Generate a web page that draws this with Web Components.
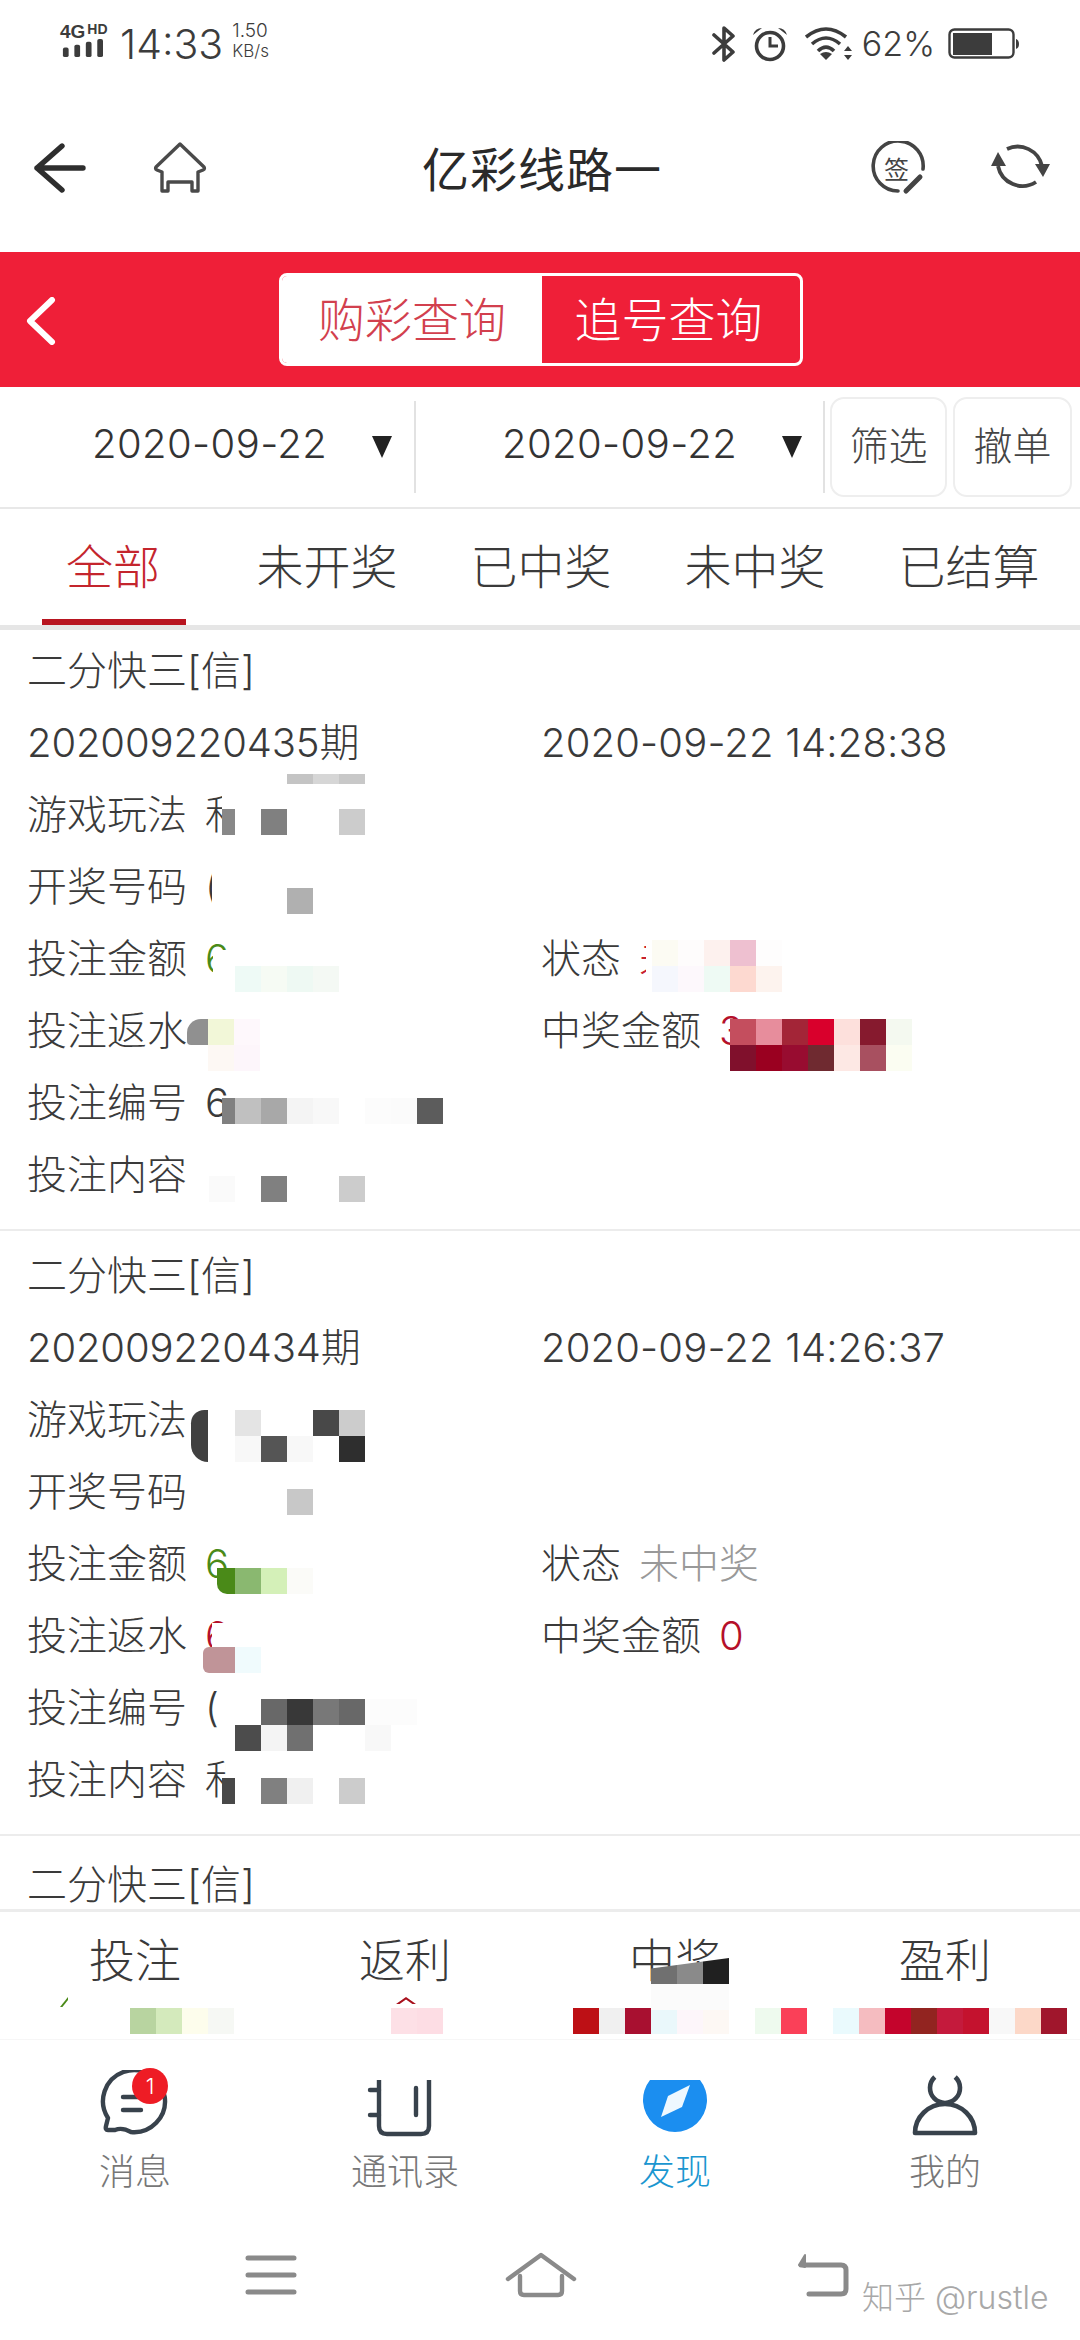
<!DOCTYPE html>
<html lang="zh">
<head>
<meta charset="utf-8">
<title>购彩查询</title>
<style>
    html, body { margin: 0; padding: 0; background: #fff; }
    body { font-family: Inter, "Noto Sans CJK SC", sans-serif; font-weight: 300; color: #333; width: 1080px; height: 2340px; overflow: hidden; }
    .screen { display: flex; flex-direction: column; height: 2340px; overflow: hidden; }
    .list { flex: 1; min-height: 0; overflow: hidden; }
</style>
</head>
<body>
<div class="screen">
    <status-bar></status-bar>
    <title-bar heading="亿彩线路一"></title-bar>
    <query-bar></query-bar>
    <date-filter></date-filter>
    <state-tabs></state-tabs>

    <div class="list">
        <order-card style="--pad: 5px" game="二分快三[信]" issue="202009220435期" time="2020-09-22 14:28:38">
            <info-row label="游戏玩法">和</info-row>
            <info-row label="开奖号码">(</info-row>
            <info-row label="投注金额" tone="#4a8a18" side="状态" side-tone="#c8202f" side-value="未">6</info-row>
            <info-row label="投注返水" side="中奖金额" side-tone="#b5102a" side-value="3"></info-row>
            <info-row label="投注编号">6</info-row>
            <info-row label="投注内容"></info-row>

            <blur-patch slot="patches" x="222" y="136" w="145" h="70" fill="#fff"></blur-patch>
            <blur-patch slot="patches" x="287" y="144" rows="#c4c4c4 #d6d6d6 #c8c8c8" cell-h="10"></blur-patch>
            <blur-patch slot="patches" x="222" y="179" w="13" h="26" fill="#888"></blur-patch>
            <blur-patch slot="patches" x="261" y="179" rows="#808080 . . #ccc"></blur-patch>
            <blur-patch slot="patches" x="212" y="234" w="110" h="54" fill="#fff"></blur-patch>
            <blur-patch slot="patches" x="287" y="258" rows="#b0b0b0"></blur-patch>
            <blur-patch slot="patches" x="213" y="320" w="160" h="44" fill="#fff"></blur-patch>
            <blur-patch slot="patches" x="235" y="336" rows="#eefaf6 #f6fbf4 #eef9f3 #f4f9f4"></blur-patch>
            <blur-patch slot="patches" x="646" y="302" w="140" h="62" fill="#fff"></blur-patch>
            <blur-patch slot="patches" x="652" y="310" rows="#fcfbf3 #fefcfc #fdf1ee #eec0d0 #fefdfd/#f5f7fd #fdf8fc #eefaf4 #fdd9d0 #fdf3ee"></blur-patch>
            <blur-patch slot="patches" x="187" y="389" w="21" h="26" fill="#909090" radius="14px 0 0 4px"></blur-patch>
            <blur-patch slot="patches" x="208" y="389" rows="#f2f7d8 #fef8fc/#fdf8f4 #fdf6fb"></blur-patch>
            <blur-patch slot="patches" x="730" y="389" rows="#c44e5e #e78d9c #a32537 #d9002c #fde0dc #861a2e #f4f9f0/#80102c #9a0020 #980c30 #6f2a30 #fde8e4 #a85060 #fbfdf2"></blur-patch>
            <blur-patch slot="patches" x="222" y="468" w="13" h="26" fill="#808080"></blur-patch>
            <blur-patch slot="patches" x="235" y="468" rows="#c0c0c0 #a8a8a8 #f4f4f4 #f8f8f8 #fff #fcfcfc #fbfbfb #5c5c5c"></blur-patch>
            <blur-patch slot="patches" x="209" y="546" rows="#fafafa #fff #808080 #fff #fff #ccc"></blur-patch>
        </order-card>

        <order-card style="--pad: 9px" game="二分快三[信]" issue="202009220434期" time="2020-09-22 14:26:37">
            <info-row label="游戏玩法"></info-row>
            <info-row label="开奖号码"></info-row>
            <info-row label="投注金额" tone="#4a8a18" side="状态" side-tone="#999" side-value="未中奖">6</info-row>
            <info-row label="投注返水" tone="#b5102a" side="中奖金额" side-tone="#b5102a" side-value="0">6</info-row>
            <info-row label="投注编号">(</info-row>
            <info-row label="投注内容">和</info-row>

            <blur-patch slot="patches" x="191" y="179" w="17" h="52" fill="#404040" radius="14px 0 0 18px"></blur-patch>
            <blur-patch slot="patches" x="235" y="179" rows="#e4e4e4 #fff #fff #484848 #ccc/#f8f8f8 #555 #f8f8f8 #fff #2e2e2e"></blur-patch>
            <blur-patch slot="patches" x="287" y="258" rows="#c8c8c8"></blur-patch>
            <blur-patch slot="patches" x="217" y="337" w="18" h="26" fill="#4a8a18" radius="0 0 0 10px"></blur-patch>
            <blur-patch slot="patches" x="235" y="337" rows="#8ab870 #d4f0b8 #fbfbf8"></blur-patch>
            <blur-patch slot="patches" x="212" y="392" w="50" h="24" fill="#fff"></blur-patch>
            <blur-patch slot="patches" x="203" y="416" w="32" h="26" fill="#c09498" radius="6px 0 0 6px"></blur-patch>
            <blur-patch slot="patches" x="235" y="416" rows="#f0fbfd"></blur-patch>
            <blur-patch slot="patches" x="235" y="468" rows="#fff #686868 #383838 #787878 #686868 #fcfcfc #fcfcfc/#4c4c4c #f4f4f4 #707070 #fff #fff #f8f8f8"></blur-patch>
            <blur-patch slot="patches" x="226" y="522" w="40" h="60" fill="#fff"></blur-patch>
            <blur-patch slot="patches" x="222" y="547" w="13" h="26" fill="#484848"></blur-patch>
            <blur-patch slot="patches" x="261" y="547" rows="#808080 #f0f0f0 #fff #ccc"></blur-patch>
        </order-card>

        <order-card style="--pad: 13px" game="二分快三[信]"></order-card>
    </div>

    <stat-bar>
        <blur-patch x="60" y="85" w="8" h="10" fill="#4a8a18" clip="polygon(100% 0, 100% 30%, 30% 100%, 0 100%)"></blur-patch>
        <blur-patch x="396" y="85" w="20" h="7" fill="#a8101c" clip="polygon(50% 0, 100% 100%, 82% 100%, 50% 35%, 18% 100%, 0 100%)"></blur-patch>
        <blur-patch x="130" y="96" rows="#b8d4a0 #d4eabc #fdfdec #f6f8f4"></blur-patch>
        <blur-patch x="391" y="96" rows="#fde0e6 #fddde4"></blur-patch>
        <blur-patch x="573" y="96" rows="#bd1015 #f0f0f0 #a81030 #eaf8fb #fdf6fa #fdf8f4"></blur-patch>
        <blur-patch x="755" y="96" rows="#eefaee #fa4058 #fff #eafafd #f5bcc0 #c4042c #922420 #c41a3c #c4122e #f8f8f8 #fcd8c8 #a0162c"></blur-patch>
        <blur-patch x="651" y="46" rows="#707070 #8a8a8a #202020" clip="polygon(0 40%, 100% 0, 100% 100%, 0 100%)"></blur-patch>
        <blur-patch x="651" y="72" rows="#fbfbfb #fbfbfb #fbfbfb"></blur-patch>
    </stat-bar>

    <main-tabs></main-tabs>
    <system-nav></system-nav>
</div>

<script>
const STROKE = '#38424c';

class StatusBar extends HTMLElement {
    constructor() {
        super();
        this.attachShadow({ mode: 'open' }).innerHTML = `
            <style>
                :host { display: flex; align-items: center; height: 84px; padding: 4px 60px 0 60px; box-sizing: border-box; color: #3c3c3c; }
                .net { display: flex; flex-direction: column; width: 46px; height: 36px; margin-top: -8px; font-family: "Liberation Sans", sans-serif; font-weight: 700; line-height: 1; }
                .net div { display: flex; align-items: flex-start; gap: 2px; height: 15px; }
                .net b { font-size: 19px; }
                .net i { font-size: 14px; font-style: normal; }
                .net svg { display: block; }
                .time { font-size: 41px; margin-left: 14px; line-height: 1; }
                .speed { display: flex; flex-direction: column; margin-left: 9px; margin-top: -6px; font-size: 19px; line-height: 20px; }
                .speed span:last-child { font-size: 17px; }
                .right { display: flex; align-items: center; margin-left: auto; height: 40px; }
                .pct { font-size: 34px; margin: 0 13px 0 9px; line-height: 1; }
            </style>
            <div class="net">
                <div><b>4G</b><i>HD</i></div>
                <svg width="44" height="22" viewBox="0 0 44 22" fill="#3c3c3c">
                    <rect x="2" y="11" width="6" height="10" rx="2"/><rect x="14" y="8" width="6" height="13" rx="2"/>
                    <rect x="26" y="5" width="6" height="16" rx="2"/><rect x="38" y="2" width="6" height="19" rx="2"/>
                </svg>
            </div>
            <span class="time">14:33</span>
            <div class="speed"><span>1.50</span><span>KB/s</span></div>
            <div class="right">
                <svg width="24" height="36" viewBox="0 0 24 36" fill="none" stroke="#3c3c3c" stroke-width="3.6" stroke-linecap="round" stroke-linejoin="round">
                    <path d="M2 9 L21 26 L12 34 V2 L21 10 L2 27"/>
                </svg>
                <svg style="margin-left:16px" width="36" height="36" viewBox="0 0 36 36" fill="none" stroke="#3c3c3c" stroke-width="3.6">
                    <circle cx="18" cy="20" r="13.5"/><path d="M18 11 V20 H26" stroke-width="3"/>
                    <path d="M1 9 Q3 2 10 2 Z M35 9 Q33 2 26 2 Z" fill="#3c3c3c" stroke="none"/>
                </svg>
                <svg style="margin-left:17px" width="48" height="36" viewBox="0 0 48 36" fill="none" stroke="#3c3c3c" stroke-width="3.6">
                    <path d="M1 11 Q21 -5 41 11"/><path d="M7 18 Q21 6 35 18"/><path d="M13 25 Q21 17 29 25" />
                    <path d="M15 28 Q21 24 27 28 L21 34 Z" fill="#3c3c3c" stroke="none"/>
                    <path d="M43 20 L47 25 H39 Z M43 34 L47 29 H39 Z" fill="#3c3c3c" stroke="none"/>
                </svg>
                <span class="pct">62%</span>
                <svg width="72" height="32" viewBox="0 0 72 32">
                    <rect x="1.5" y="1.5" width="64" height="28" rx="5" fill="none" stroke="#3c3c3c" stroke-width="2.4"/>
                    <rect x="5" y="5" width="39" height="22" fill="#3c3c3c"/>
                    <path d="M68 11 Q71 12 71 16 Q71 20 68 21 Z" fill="#3c3c3c"/>
                </svg>
            </div>
        `;
    }
}

class TitleBar extends HTMLElement {
    constructor() {
        super();
        this.attachShadow({ mode: 'open' }).innerHTML = `
            <style>
                :host { display: grid; grid-template-columns: 1fr auto 1fr; align-items: center; height: 168px; padding: 0 30px 0 34px; box-sizing: border-box; background: #fff; }
                h1 { margin: 0; padding-bottom: 3px; font-size: 47px; font-weight: 400; color: #2a2a2a; letter-spacing: 1px; }
                .side { display: flex; align-items: center; }
                .end { justify-content: flex-end; gap: 64px; }
                .start { gap: 67px; }
                .sign { position: relative; width: 56px; height: 54px; display: grid; place-items: center; font-size: 25px; color: #444; }
                .sign span { margin-right: 3px; font-weight: 400; }
                .sign svg { position: absolute; inset: 0; }
            </style>
            <div class="side start">
                <svg width="52" height="50" viewBox="0 0 52 50" fill="none" stroke="#2e2e2e" stroke-width="5.4" stroke-linecap="round" stroke-linejoin="round">
                    <path d="M28 3 L3 25 L28 47 M3 25 H49"/>
                </svg>
                <svg width="54" height="52" viewBox="0 0 54 52" fill="none" stroke="#4a4a4a" stroke-width="3.4" stroke-linejoin="round">
                    <path d="M27 2 L3 25 Q2 27 4 28 L9 30 V49 H15 V40 H39 V49 H45 V30 L50 28 Q52 27 51 25 Z"/>
                </svg>
            </div>
            <h1></h1>
            <div class="side end">
                <div class="sign">
                    <svg width="56" height="54" viewBox="0 0 56 54" fill="none" stroke="#444" stroke-width="3.6" stroke-linecap="round">
                        <path d="M28 50 A25 25 0 1 1 53 28"/><path d="M36 50 L50 36" stroke-width="5"/>
                    </svg>
                    <span>签</span>
                </div>
                <svg width="60" height="52" viewBox="0 0 60 52" fill="none" stroke="#444" stroke-width="3.8">
                    <path d="M17 7 A25 25 0 0 1 52 24"/><path d="M46 40 A25 25 0 0 1 8 24"/>
                    <path d="M1 24 H16 L8 10 Z M45 22 H60 L53 35 Z" fill="#444" stroke="none"/>
                </svg>
            </div>
        `;
        this.shadowRoot.querySelector('h1').textContent = this.getAttribute('heading');
    }
}

class QueryBar extends HTMLElement {
    constructor() {
        super();
        this.attachShadow({ mode: 'open' }).innerHTML = `
            <style>
                :host { display: flex; justify-content: center; align-items: center; position: relative; height: 135px; background: #ef1f38; }
                svg { position: absolute; left: 26px; top: 45px; }
                .seg { display: grid; grid-template-columns: 260px 258px; height: 93px; margin-left: 2px; box-sizing: border-box; border: 3px solid #fff; border-radius: 8px; overflow: hidden; font-size: 47px; }
                .seg span { display: grid; place-items: center; padding-bottom: 7px; }
                .on { background: #fff; color: #d2404e; }
                .off { color: #fff; padding-right: 5px; }
            </style>
            <svg width="30" height="48" viewBox="0 0 30 48" fill="none" stroke="#fff" stroke-width="6" stroke-linecap="round" stroke-linejoin="round"><path d="M26 3 L4 24 L26 45"/></svg>
            <div class="seg"><span class="on">购彩查询</span><span class="off">追号查询</span></div>
        `;
    }
}

class DateFilter extends HTMLElement {
    constructor() {
        super();
        this.attachShadow({ mode: 'open' }).innerHTML = `
            <style>
                :host { display: flex; align-items: center; height: 122px; box-sizing: border-box; padding-right: 8px; border-bottom: 2px solid #e8e8e8; background: #fff; font-size: 40px; color: #333; }
                .date { display: flex; align-items: center; width: 416px; height: 92px; box-sizing: border-box; padding-left: 92px; border-right: 2px solid #e2e2e2; }
                .date + .date { width: 409px; padding-left: 86px; }
                .date span { padding-bottom: 7px; letter-spacing: 0.4px; }
                .date i { width: 0; height: 0; margin-left: 45px; border-left: 10px solid transparent; border-right: 10px solid transparent; border-top: 22px solid #222; }
                .btn { display: grid; place-items: center; height: 100px; width: 117px; box-sizing: border-box; padding-bottom: 8px; border: 2px solid #eee; border-radius: 14px; margin-left: 6px; color: #444; font-size: 39px; }
            </style>
            <div class="date"><span>2020-09-22</span><i></i></div>
            <div class="date"><span>2020-09-22</span><i></i></div>
            <div class="btn" style="margin-left:5px">筛选</div>
            <div class="btn" style="width:119px">撤单</div>
        `;
    }
}

class StateTabs extends HTMLElement {
    constructor() {
        super();
        this.attachShadow({ mode: 'open' }).innerHTML = `
            <style>
                :host { display: grid; grid-template-columns: repeat(5, 214px); padding-left: 6px; height: 121px; box-sizing: border-box; border-bottom: 5px solid #e6e6e6; background: #fff; font-size: 47px; color: #3a3a3a; }
                span { display: grid; place-items: center; position: relative; padding-bottom: 8px; }
                .on { color: #c4252d; }
                .on::after { content: ""; position: absolute; left: 36px; width: 144px; bottom: 0; height: 6px; background: #b81520; }
            </style>
            <span class="on">全部</span><span>未开奖</span><span>已中奖</span><span>未中奖</span><span>已结算</span>
        `;
    }
}

class OrderCard extends HTMLElement {
    constructor() {
        super();
        this.attachShadow({ mode: 'open' }).innerHTML = `
            <style>
                :host { display: block; position: relative; padding: var(--pad, 9px) 28px 18px 27px; box-sizing: border-box; border-bottom: 2px solid #ececec; background: #fff; font-size: 40px; line-height: 48px; color: #3a3a3a; }
                .row { display: grid; grid-template-columns: 514px 1fr; align-items: center; height: 72px; }
                .issue { letter-spacing: -0.15px; }
                .time { letter-spacing: 0.15px; }
            </style>
            <div class="row"><span class="game"></span></div>
            <div class="row meta"><span class="issue"></span><span class="time"></span></div>
            <slot></slot>
            <slot name="patches"></slot>
        `;
    }

    connectedCallback() {
        this.shadowRoot.querySelector('.game').textContent = this.getAttribute('game');
        const meta = this.shadowRoot.querySelector('.meta');
        if (this.hasAttribute('issue')) {
            this.shadowRoot.querySelector('.issue').textContent = this.getAttribute('issue');
            this.shadowRoot.querySelector('.time').textContent = this.getAttribute('time');
        } else {
            meta.remove();
        }
    }
}

class InfoRow extends HTMLElement {
    constructor() {
        super();
        this.attachShadow({ mode: 'open' }).innerHTML = `
            <style>
                :host { display: grid; grid-template-columns: 514px 1fr; align-items: center; height: 72px; }
                .cell { display: flex; align-items: baseline; gap: 18px; white-space: nowrap; }
            </style>
            <div class="cell"><span class="label"></span><span class="value"><slot></slot></span></div>
            <div class="cell"><span class="side"></span><span class="side-value"></span></div>
        `;
    }

    connectedCallback() {
        const root = this.shadowRoot;
        root.querySelector('.label').textContent = this.getAttribute('label');
        root.querySelector('.side').textContent = this.getAttribute('side') || '';
        const sv = root.querySelector('.side-value');
        sv.textContent = this.getAttribute('side-value') || '';
        if (this.hasAttribute('side-tone')) sv.style.color = this.getAttribute('side-tone');
        if (this.hasAttribute('tone')) root.querySelector('.value').style.color = this.getAttribute('tone');
    }
}

// the mosaic blocks lying over the private values of a row
class BlurPatch extends HTMLElement {
    constructor() {
        super();
        this.attachShadow({ mode: 'open' }).innerHTML = `
            <style>
                :host { position: absolute; display: grid; grid-auto-columns: 26px; justify-content: start; }
            </style>
        `;
    }

    connectedCallback() {
        const a = n => this.getAttribute(n);
        this.style.left = a('x') + 'px';
        this.style.top = a('y') + 'px';
        if (a('clip')) this.style.clipPath = a('clip');
        if (a('fill')) {
            this.style.width = a('w') + 'px';
            this.style.height = a('h') + 'px';
            this.style.background = a('fill');
            if (a('radius')) this.style.borderRadius = a('radius');
            return;
        }
        const h = a('cell-h') || 26;
        a('rows').split('/').forEach((row, r) => {
            row.trim().split(/\s+/).forEach((color, c) => {
                if (color === '.') return;
                const cell = document.createElement('div');
                cell.style.cssText = `grid-row:${r + 1};grid-column:${c + 1};width:26px;height:${h}px;background:${color}`;
                this.shadowRoot.appendChild(cell);
            });
        });
    }
}

class StatBar extends HTMLElement {
    constructor() {
        super();
        this.attachShadow({ mode: 'open' }).innerHTML = `
            <style>
                :host { display: grid; grid-template-columns: repeat(4, 270px); position: relative; height: 131px; box-sizing: border-box; border-top: 3px solid #ececec; border-bottom: 1px solid #f6f6f6; background: #fff; font-size: 46px; color: #3a3a3a; text-align: center; }
                span { line-height: 96px; }
            </style>
            <span>投注</span><span>返利</span><span>中奖</span><span>盈利</span>
            <slot></slot>
        `;
    }
}

class MainTabs extends HTMLElement {
    constructor() {
        super();
        this.attachShadow({ mode: 'open' }).innerHTML = `
            <style>
                :host { display: grid; grid-template-columns: repeat(4, 270px); height: 165px; background: #fff; font-size: 36px; color: #777; text-align: center; }
                .item { display: flex; flex-direction: column; align-items: center; padding-top: 30px; }
                .ico { position: relative; width: 80px; height: 68px; }
                .ico svg { display: block; }
                .lab { margin-top: 13px; line-height: 42px; }
                .badge { position: absolute; left: 37px; top: -2px; width: 36px; height: 36px; border-radius: 50%; background: #ee1c25; color: #fff; font-size: 22px; line-height: 36px; }
                .on { color: #1a96d0; }
            </style>
            <div class="item">
                <div class="ico">
                    <svg width="80" height="68" viewBox="0 0 80 68" fill="none" stroke="${STROKE}" stroke-width="4.4" stroke-linecap="round" stroke-linejoin="round">
                        <path d="M13 60 Q10 60 11 56 L13 48 A31 31 0 1 1 36 62 Q27 57 20 60 Z"/>
                        <path d="M28 27 H48 M28 40 H46"/>
                    </svg>
                    <span class="badge">1</span>
                </div>
                <span class="lab">消息</span>
            </div>
            <div class="item">
                <div class="ico">
                    <svg width="80" height="68" viewBox="0 0 80 68" fill="none" stroke="${STROKE}" stroke-width="4.4" stroke-linecap="round">
                        <path d="M14 10 V56 Q14 64 22 64 H56 Q64 64 64 56 V10" stroke-linecap="butt"/>
                        <path d="M51 18 V45 M5 20 H14 M5 45 H14"/>
                    </svg>
                </div>
                <span class="lab">通讯录</span>
            </div>
            <div class="item">
                <div class="ico">
                    <svg width="80" height="68" viewBox="0 0 80 68">
                        <path d="M15 10 H65 A32 32 0 1 1 15 10 Z" fill="#1b8ef0"/>
                        <path d="M55 15 L47 37 L26 47 L33 26 Z" fill="#eef8ff"/>
                    </svg>
                </div>
                <span class="lab on">发现</span>
            </div>
            <div class="item">
                <div class="ico">
                    <svg width="80" height="68" viewBox="0 0 80 68" fill="none" stroke="${STROKE}" stroke-width="4.6" stroke-linejoin="round">
                        <path d="M29.8 7 A15 15 0 1 0 50.2 7"/>
                        <path d="M10 63 A30 29 0 0 1 70 63 Z"/>
                    </svg>
                </div>
                <span class="lab">我的</span>
            </div>
        `;
    }
}

class SystemNav extends HTMLElement {
    constructor() {
        super();
        this.attachShadow({ mode: 'open' }).innerHTML = `
            <style>
                :host { display: grid; grid-template-columns: 270px 270px 294px; justify-content: start; justify-items: center; align-items: center; position: relative; height: 135px; box-sizing: border-box; padding: 4px 0 0 136px; background: #fff; }
                .mark { position: absolute; left: 862px; top: 67px; font-size: 32px; color: #a8a8a8; white-space: nowrap; }
            </style>
            <svg width="52" height="42" viewBox="0 0 52 42" stroke="#8a8a8a" stroke-width="5" stroke-linecap="round"><path d="M3 4 H49 M3 21 H49 M3 38 H49"/></svg>
            <svg width="72" height="46" viewBox="0 0 72 46" fill="none" stroke="#8a8a8a" stroke-width="4.4" stroke-linecap="round" stroke-linejoin="round">
                <path d="M3 27 L36 3 L69 27"/><path d="M15 24 V39 Q15 43 19 43 H53 Q57 43 57 39 V24"/>
            </svg>
            <svg width="52" height="44" viewBox="0 0 52 44" fill="none" stroke="#8a8a8a" stroke-width="5" stroke-linecap="round" stroke-linejoin="round">
                <path d="M4 12 H44 Q49 12 49 17 V36 Q49 41 44 41 H12"/>
                <path d="M8 2 L2 12 L8 14 Z" fill="#8a8a8a" stroke-width="2"/>
            </svg>
            <span class="mark">知乎 @rustle</span>
        `;
    }
}

customElements.define('status-bar', StatusBar);
customElements.define('title-bar', TitleBar);
customElements.define('query-bar', QueryBar);
customElements.define('date-filter', DateFilter);
customElements.define('state-tabs', StateTabs);
customElements.define('order-card', OrderCard);
customElements.define('info-row', InfoRow);
customElements.define('blur-patch', BlurPatch);
customElements.define('stat-bar', StatBar);
customElements.define('main-tabs', MainTabs);
customElements.define('system-nav', SystemNav);
</script>
</body>
</html>
